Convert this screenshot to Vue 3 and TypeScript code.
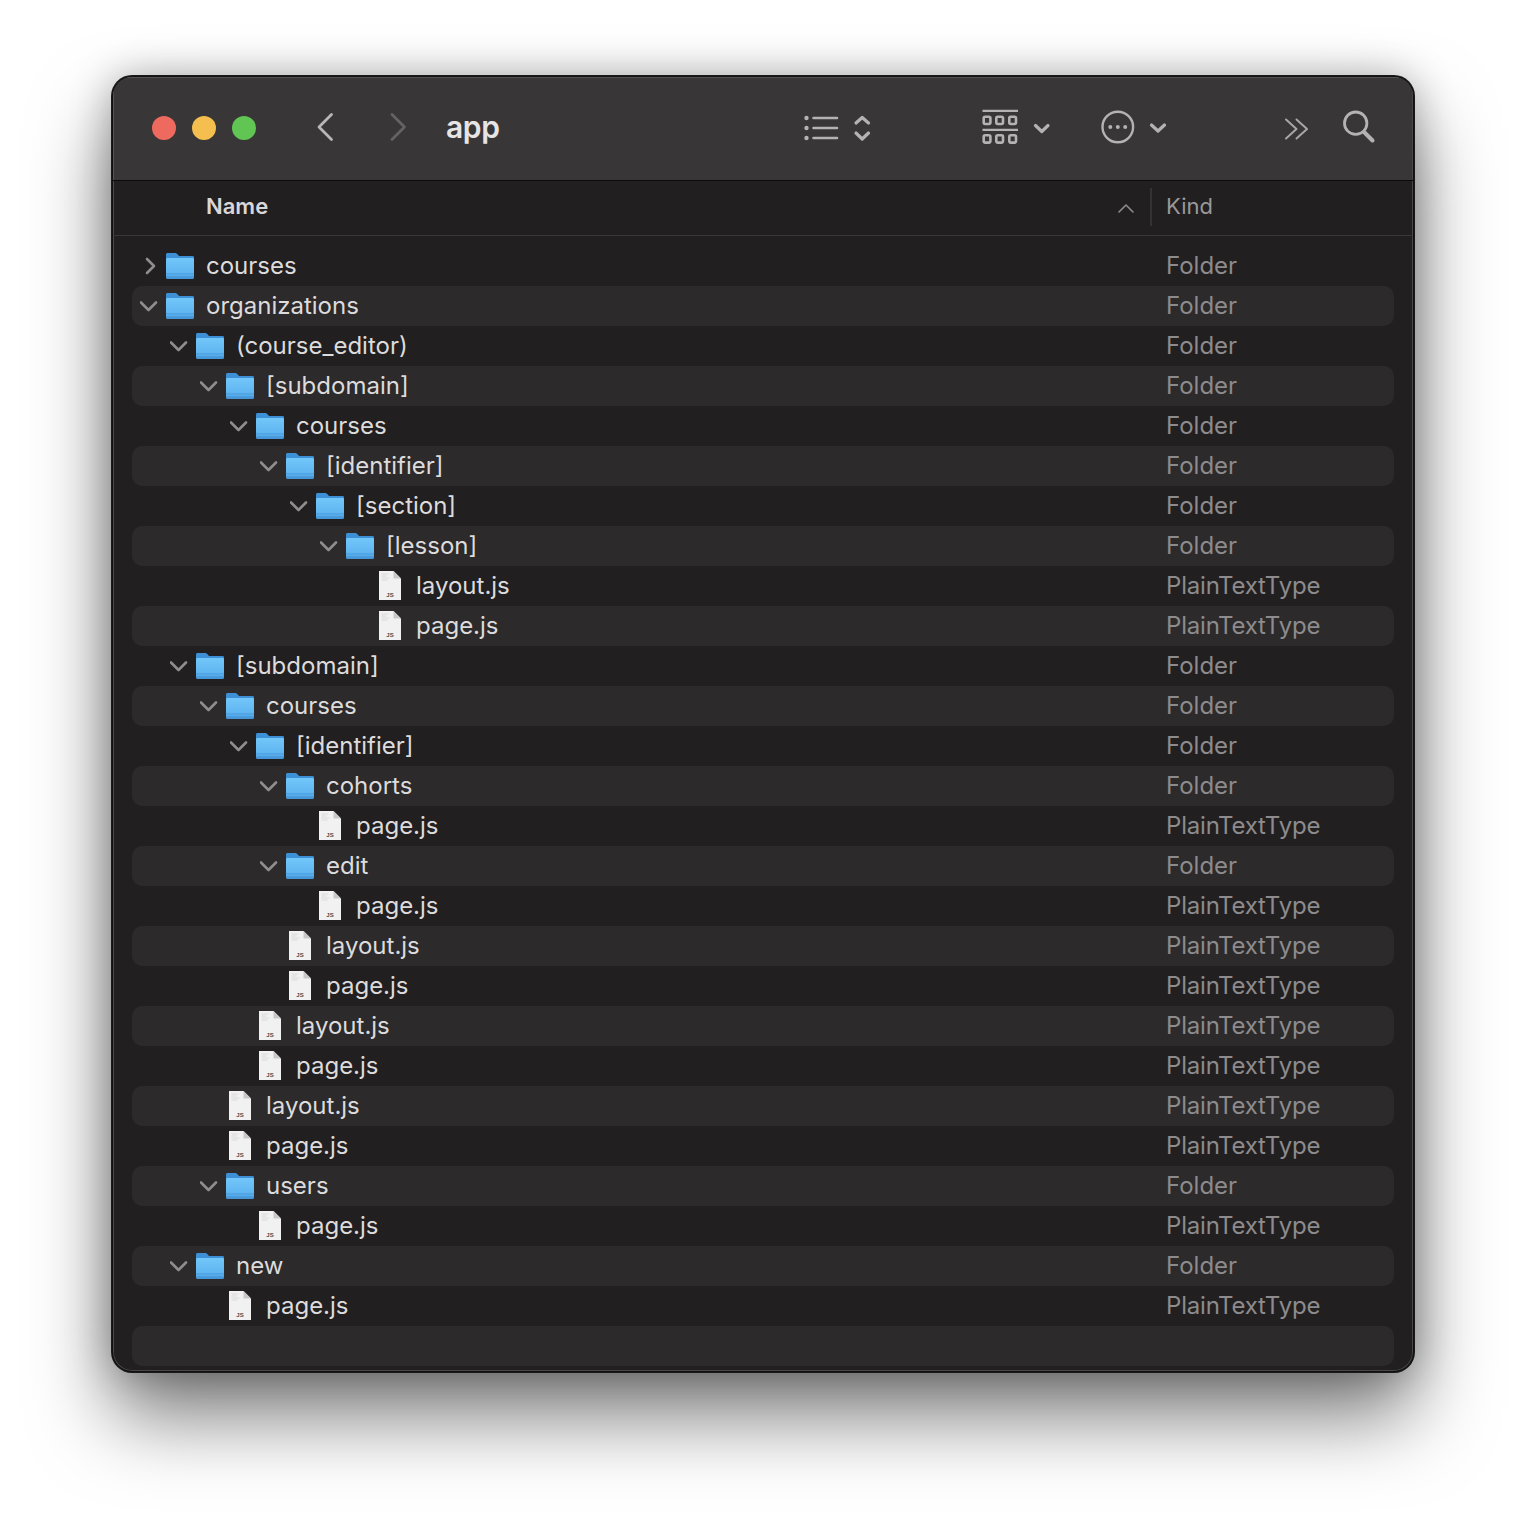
<script setup lang="ts">
interface Row { name: string; depth: number; kind: 'folder' | 'file'; open?: boolean }
const f = (name: string, depth: number, open = true): Row => ({ name, depth, kind: 'folder', open })
const p = (name: string, depth: number): Row => ({ name, depth, kind: 'file' })
const rows: Row[] = [
  f('courses', 0, false), f('organizations', 0), f('(course_editor)', 1), f('[subdomain]', 2),
  f('courses', 3), f('[identifier]', 4), f('[section]', 5), f('[lesson]', 6),
  p('layout.js', 7), p('page.js', 7), f('[subdomain]', 1), f('courses', 2), f('[identifier]', 3),
  f('cohorts', 4), p('page.js', 5), f('edit', 4), p('page.js', 5), p('layout.js', 4), p('page.js', 4),
  p('layout.js', 3), p('page.js', 3), p('layout.js', 2), p('page.js', 2), f('users', 2), p('page.js', 3),
  f('new', 1), p('page.js', 2)
]
</script>

<template>
  <div class="stage">
    <div class="window">
      <header class="toolbar">
        <span class="light red"></span>
        <span class="light yellow"></span>
        <span class="light green"></span>
        <svg class="nav back" width="22" height="40" viewBox="0 0 22 40"><path d="M17.500 6.500 5 19l12.500 12.500" /></svg>
        <svg class="nav fwd" width="22" height="40" viewBox="0 0 22 40"><path d="M4 6.500 16.500 19 4 31.500" /></svg>
        <span class="title">app</span>
        <span class="spacer"></span>
        <svg class="tool t-list" width="68" height="40" viewBox="0 0 68 40">
          <circle cx="2.500" cy="10" r="2.200" class="fill" /><circle cx="2.500" cy="20" r="2.200" class="fill" /><circle cx="2.500" cy="30" r="2.200" class="fill" />
          <path d="M9.500 10H33M9.500 20H33M9.500 30H33" class="lines" />
          <path d="M52 15l6.200-5.500L64.500 15M52 25l6.200 6 6.300-6" class="heavy" />
        </svg>
        <svg class="tool t-group" width="70" height="40" viewBox="0 0 70 40">
          <path d="M1.500 2.800H37M1.500 21.800H37" class="thin" />
          <rect x="2.700" y="8.700" width="6.700" height="7.300" rx="1.500" class="box" /><rect x="15.300" y="8.700" width="6.700" height="7.300" rx="1.500" class="box" /><rect x="28.300" y="8.700" width="6.700" height="7.300" rx="1.500" class="box" />
          <rect x="2.700" y="27.300" width="6.700" height="7.300" rx="1.500" class="box" /><rect x="15.300" y="27.300" width="6.700" height="7.300" rx="1.500" class="box" /><rect x="28.300" y="27.300" width="6.700" height="7.300" rx="1.500" class="box" />
          <path d="M54.500 17.500l6.300 6 6.200-6" class="heavy" />
        </svg>
        <svg class="tool t-more" width="68" height="40" viewBox="0 0 68 40">
          <circle cx="17.800" cy="19" r="15.300" />
          <circle cx="10.300" cy="19" r="2" class="fill" /><circle cx="17.800" cy="19" r="2" class="fill" /><circle cx="25.200" cy="19" r="2" class="fill" />
          <path d="M51.500 17l6.500 6 6.500-6" class="heavy" />
        </svg>
        <svg class="tool t-over" width="26" height="40" viewBox="0 0 26 40"><path d="M2 11.500 12.500 21 2 30.500M12.500 11.500 23 21l-10.500 9.500" /></svg>
        <svg class="tool t-search" width="34" height="40" viewBox="0 0 34 40">
          <circle cx="13.700" cy="15.200" r="11.200" class="lens" /><path d="M22 24l8.500 8.500" class="search-handle" />
        </svg>
      </header>

      <div class="columns">
        <span class="col-name">Name</span>
        <svg class="sort" width="16" height="9" viewBox="0 0 16 9"><path d="M1 8l7-7 7 7" /></svg>
        <span class="divider"></span>
        <span class="col-kind">Kind</span>
      </div>

      <div class="list">
        <svg class="defs" width="0" height="0">
          <defs>
            <linearGradient id="folderFill" x1="0" y1="0" x2="0" y2="1">
              <stop offset="0" stop-color="#72c6f9" /><stop offset="0.72" stop-color="#5fb5f0" /><stop offset="0.74" stop-color="#4fa3e3" /><stop offset="0.86" stop-color="#5aaeea" /><stop offset="0.88" stop-color="#4a9cdd" /><stop offset="1" stop-color="#4494d8" />
            </linearGradient>
          </defs>
        </svg>
        <div v-for="(r, i) in rows" :key="i" class="row" :class="{ alt: i % 2 === 1 }">
          <span class="indent" :style="{ width: r.depth * 30 + 'px' }"></span>
          <span class="twist">
            <svg v-if="r.kind === 'folder'" width="18" height="18" viewBox="0 0 18 18">
              <path v-if="r.open" d="M1 5.500l7.500 7.500L16 5.500" />
              <path v-else d="M7 2l7 7-7 7" />
            </svg>
          </span>
          <span class="icon">
            <svg v-if="r.kind === 'folder'" class="folder" width="28" height="26" viewBox="0 0 29 26" preserveAspectRatio="none">
              <path d="M1.500 0H9.500c1 0 1.500.4 2.200 1.100L13.500 3H27.500c.9 0 1.500.6 1.500 1.500V8H0V1.500C0 .6.6 0 1.500 0z" fill="#3d8fd6" />
              <path d="M1.500 5H27.500c.9 0 1.500.6 1.500 1.500v18c0 .9-.6 1.500-1.500 1.500H1.500C.6 26 0 25.400 0 24.500v-18C0 5.600.6 5 1.500 5z" fill="url(#folderFill)" />
            </svg>
            <svg v-else class="file" width="22" height="29" viewBox="0 0 22 29">
              <path d="M0 0H14.500L22 7.500V29H0z" fill="#f2f1f1" />
              <path d="M14.500 0V7.500H22z" fill="#c9c8c8" />
              <path d="M2.500 3h7M2.500 5h5M2.500 7h8M2.500 9h6" stroke="#cfcfcf" stroke-width=".7" fill="none" />
              <text x="11" y="26" text-anchor="middle" class="js">JS</text>
            </svg>
          </span>
          <span class="name">{{ r.name }}</span>
          <span class="kind" :class="{ 'kind-file': r.kind === 'file' }">{{ r.kind === 'folder' ? 'Folder' : 'PlainTextType' }}</span>
        </div>
        <div class="row alt"></div>
      </div>
    </div>
  </div>
</template>

<style>
html, body { margin: 0; background: #fff; }
</style>

<style scoped>
.stage {
  height: 1520px;
  box-sizing: border-box;
  padding: 76px 112px 148px;
  background: #fff;
  font-family: Inter, "Liberation Sans", sans-serif;
  overflow: hidden;
}
.window {
  height: 1296px;
  box-sizing: border-box;
  border-radius: 20px;
  background: #211f20;
  overflow: hidden;
  box-shadow: inset 0 0 0 1px #4a4849, 0 0 0 1px #1a1a1a, 0 44px 80px rgba(0, 0, 0, .52), 0 0 40px rgba(0, 0, 0, .28);
  display: flex;
  flex-direction: column;
  border: 1px solid #111;
}
.toolbar {
  height: 104px;
  flex: none;
  box-sizing: border-box;
  padding-bottom: 1px;
  display: flex;
  align-items: center;
  background: #383637;
  border-bottom: 1px solid #0c0b0c;
  box-shadow: inset 1px 1px 0 #555354, inset -1px 0 0 #4a4849;
}
.light { width: 24px; height: 24px; border-radius: 50%; margin-right: 16px; flex: none; }
.red { background: #ee6a5f; margin-left: 39px; }
.yellow { background: #f5bf4f; }
.green { background: #61c554; }
.toolbar path, .toolbar rect, .toolbar circle, .sort path, .twist path {
  fill: none; stroke: #b4b2b3; stroke-width: 2.4; stroke-linecap: round; stroke-linejoin: round;
}
.nav { flex: none; }
.toolbar .nav path { stroke-width: 2.8; }
.back { margin-left: 42px; }
.toolbar .back path { stroke: #b9b7b8; }
.fwd { margin-left: 52px; }
.toolbar .fwd path { stroke: #646263; }
.title { margin-left: 36px; margin-bottom: 2px; font-size: 30px; font-weight: 600; color: #e6e4e5; letter-spacing: -.4px; }
.spacer { flex: 1; }
.tool { flex: none; }
.toolbar circle.fill { fill: #b4b2b3; stroke: none; }
.toolbar .heavy { stroke-width: 3.2; }
.toolbar .lines { stroke-width: 2.6; }
.toolbar .thin { stroke-width: 2.2; stroke-linecap: butt; }
.toolbar .box { stroke-width: 2.6; }
.t-list { margin-right: 109px; }
.t-group { margin-right: 49px; }
.t-more { margin-right: 116px; }
.t-over { margin-right: 32px; }
.toolbar .t-over path { stroke-width: 2; stroke: #a8a6a7; }
.t-search { margin-right: 37px; }
.toolbar .lens { stroke-width: 2.8; }
.toolbar .search-handle { stroke-width: 4; }
.columns {
  height: 55px;
  flex: none;
  display: flex;
  align-items: center;
  box-sizing: border-box;
  border-bottom: 1.5px solid #3a3839;
  font-size: 22px;
  padding-bottom: 4px;
}
.col-name { margin-left: 93px; flex: 1; font-weight: 600; color: #d9d7d8; }
.sort { margin-right: 16px; margin-top: 4px; }
.sort path { stroke-width: 1.6; stroke: #8e8c8d; }
.divider { width: 2px; height: 38px; background: #343233; margin-top: 2px; }
.col-kind { margin-left: 14px; width: 247px; color: #9a9899; }
.list { padding: 10px 19px 0; }
.defs { position: absolute; }
.row {
  height: 40px;
  display: flex;
  align-items: center;
  border-radius: 10px;
  font-size: 24px;
}
.row.alt { background: #2c2a2b; }
.indent { flex: none; }
.twist { width: 34px; flex: none; display: flex; align-items: center; justify-content: flex-end; padding-right: 8px; box-sizing: border-box; }
.twist svg { display: block; }
.twist path { stroke: #8f8d8e; stroke-width: 2.6; }
.icon { width: 29px; flex: none; display: flex; justify-content: center; }
.icon svg { display: block; }
.icon .folder { margin-right: 1px; }
.icon .file { margin: -1px 0 0 -1px; }
.js { font-size: 6px; font-weight: 700; fill: #4a4a4a; font-family: "Liberation Sans", sans-serif; }
.name { margin-left: 11px; margin-bottom: 2px; flex: 1; color: #dddbdc; white-space: nowrap; }
.kind { width: 228px; margin-bottom: 2px; flex: none; color: #8d8b8c; white-space: nowrap; }
.kind-file { letter-spacing: -.2px; }
</style>
